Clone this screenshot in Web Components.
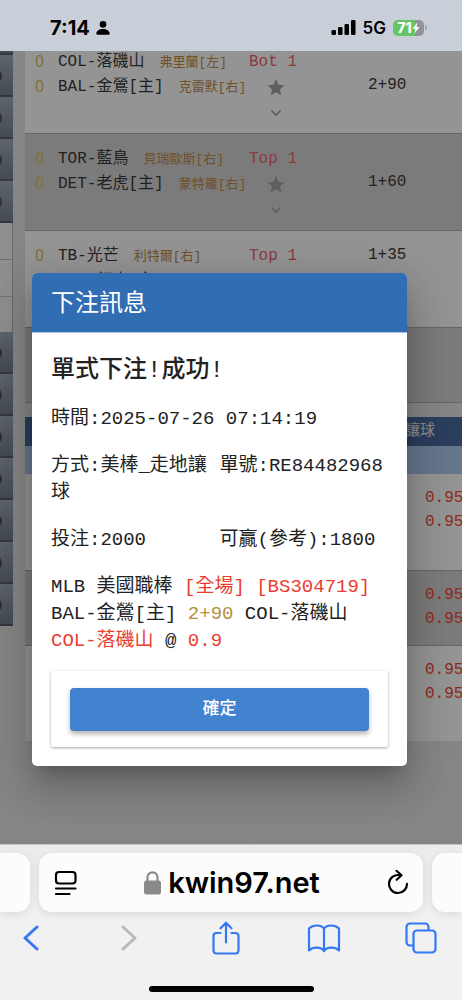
<!DOCTYPE html>
<html lang="zh-Hant">
<head>
<meta charset="utf-8">
<meta name="viewport" content="width=device-width, initial-scale=1">
<title>kwin97.net</title>
<style>
  html, body {
    height: 100%;
    margin: 0;
  }
  body {
    display: flex;
    flex-direction: column;
    background: #f0f0f0;
    color: #222;
    font-family: "Liberation Mono", "Noto Sans CJK TC", monospace;
    font-size: 16px;
  }
</style>
</head>
<body>
  <status-bar time="7:14" network="5G" battery="71"></status-bar>
  <page-stage>
    <side-menu slot="menu"></side-menu>
    <game-table></game-table>
    <odds-table></odds-table>
    <bet-dialog slot="dialog" heading="下注訊息">
      <span slot="result">單式下注!成功!</span>
      <bet-slip></bet-slip>
    </bet-dialog>
  </page-stage>
  <browser-bar address="kwin97.net"></browser-bar>

<script>
(function() {

  // attach an open root and fill it
  function render(el, html) {
    el.attachShadow({ mode: 'open' });
    const template = document.createElement('template');
    template.innerHTML = html;
    el.shadowRoot.appendChild(template.content.cloneNode(true));
  }

  class StatusBar extends HTMLElement {
    constructor() {
      super();
      render(this, `
      <style>
        :host {
          display: flex;
          flex: none;
          align-items: center;
          justify-content: space-between;
          box-sizing: border-box;
          height: 51px;
          padding: 4px 35px 0 50px;
          background: #c9cfd8;
          color: #000;
          font-family: Inter, sans-serif;
        }
        div { display: flex; align-items: center; }
        .left { gap: 6px; }
        .right { gap: 7px; }
        .time { font-size: 20px; font-weight: 700; }
        .net { font-size: 17px; font-weight: 600; }
        .battery { gap: 1px; }
        .cell {
          height: 16px;
          width: 31px;
          border-radius: 5px;
          background: linear-gradient(90deg, #65c466 22px, #929399 22px);
          color: #fff;
          font-size: 14px;
          font-weight: 800;
          justify-content: center;
        }
        .tip { width: 2px; height: 5px; border-radius: 0 2px 2px 0; background: #a2a6ad; }
        svg { display: block; }
      </style>
      <div class="left">
        <span class="time"></span>
        <svg width="14" height="14" viewBox="0 0 14 14"><circle cx="7" cy="3.4" r="3.3"/><path d="M0.3 12.6C0.3 9.6 3.4 7.9 7 7.9s6.7 1.700 6.700 4.700c0 .8-.5 1.200-1.200 1.200h-11c-.7 0-1.200-.4-1.200-1.200z"/></svg>
      </div>
      <div class="right">
        <svg width="25" height="15" viewBox="0 0 25 15"><rect x="0.500" y="10" width="4.500" height="5" rx="1.300"/><rect x="7" y="7" width="4.500" height="8" rx="1.300"/><rect x="13.500" y="4" width="4.500" height="11" rx="1.300"/><rect x="20" y="0" width="4.500" height="15" rx="1.300"/></svg>
        <span class="net"></span>
        <div class="battery">
          <div class="cell"><span class="level"></span><svg width="8" height="12" viewBox="0 0 8 12"><path fill="#fff" d="M5.300 0.500L0.500 6.800h2.800L2.400 11.500 7.500 5H4.500z"/></svg></div>
          <div class="tip"></div>
        </div>
      </div>`);
    }

    connectedCallback() {
      this.shadowRoot.querySelector('.time').textContent = this.getAttribute('time');
      this.shadowRoot.querySelector('.net').textContent = this.getAttribute('network');
      this.shadowRoot.querySelector('.level').textContent = this.getAttribute('battery');
    }
  }

  class PageStage extends HTMLElement {
    constructor() {
      super();
      render(this, `
      <style>
        :host {
          position: relative;
          display: flex;
          flex: 1;
          gap: 12px;
          min-height: 0;
          overflow: hidden;
          background: #e7e7e7;
        }
        /* scrolled a little past the top of the first game */
        main { flex: 1; min-width: 0; margin-top: -14px; }
      </style>
      <slot name="menu"></slot>
      <main><slot></slot></main>
      <slot name="dialog"></slot>`);
    }
  }

  class SideMenu extends HTMLElement {
    constructor() {
      super();
      const item = '<button type="button" aria-label="選單"><i></i></button>';
      render(this, `
      <style>
        :host { display: block; width: 13px; flex: none; overflow: hidden; margin-top: -38px; }
        button {
          display: flex;
          align-items: center;
          width: 100%;
          height: 42px;
          padding: 0;
          border: 0;
          border-top: 1px solid #a4aebb;
          border-bottom: 2px solid #57606e;
          background: linear-gradient(#a0abba, #76828f);
        }
        i { width: 14px; height: 14px; flex: none; margin-left: -12px; border-radius: 50%; background: #4c535d; }
        ul { margin: 0; padding: 0; list-style: none; border-right: 1px solid #bbb; background: #f6f6f6; }
        li { box-sizing: border-box; height: 37px; border-bottom: 1px solid #c4c4c4; }
        li:last-child { height: 35px; border: 0; }
      </style>
      ${item.repeat(5)}
      <ul><li></li><li></li><li></li></ul>
      ${item.repeat(7)}`);
    }
  }

  const games = [
    { away: 'COL-落磯山', awayP: '弗里蘭[左]', home: 'BAL-金鶯[主]', homeP: '克雷默[右]', inning: 'Bot 1', line: '2+90' },
    { away: 'TOR-藍鳥', awayP: '貝瑞歐斯[右]', home: 'DET-老虎[主]', homeP: '蒙特羅[右]', inning: 'Top 1', line: '1+60' },
    { away: 'TB-光芒', awayP: '利特爾[右]', home: 'CIN-紅人[主]', homeP: '', inning: 'Top 1', line: '1+35', top: true }
  ];

  class GameTable extends HTMLElement {
    constructor() {
      super();
      const rows = games.map(g => `
        <tr>
          <td class="score">0<br>0</td>
          <td>${g.away}<small>${g.awayP}</small><br>${g.home}<small>${g.homeP}</small></td>
          <td class="inning">${g.inning}
            <svg width="54" height="50" viewBox="0 0 54 50"><path fill="#a4a4a4" d="M27 5l2.500 5.700 6 .6-4.500 4.100 1.300 6.100-5.300-3.200-5.300 3.200 1.300-6.100-4.500-4.100 6-.6z"/><path fill="none" stroke="#a0a0a0" stroke-width="1.600" d="M22.500 36.500l4.500 4.500 4.500-4.500"/></svg>
          </td>
          <td class="line${g.top ? ' top' : ''}">${g.line}</td>
        </tr>`).join('');
      render(this, `
      <style>
        :host { display: block; margin-bottom: 14px; color: #3a3a3a; }
        table { width: 100%; table-layout: fixed; border-spacing: 0; line-height: 25px; }
        tr { height: 97px; background: #fff; }
        tr:nth-child(even) { background: #d5d5d5; }
        tr:last-child { height: 75px; }
        td { box-sizing: border-box; padding: 13px 0 0; border-bottom: 1px solid #b0b0b0; vertical-align: top; white-space: nowrap; }
        .score { padding-top: 12px; padding-left: 10px; color: #dcc458; font-family: Roboto, sans-serif; }
        small { margin-left: 15px; color: #bd8c43; font-size: 13px; }
        .inning { color: #f0646c; line-height: 24px; }
        .inning svg { display: block; }
        .line { padding-top: 36px; padding-left: 65px; line-height: 24px; }
        .line.top { padding-top: 12px; }
      </style>
      <table>
        <colgroup><col style="width:33px"><col style="width:191px"><col style="width:54px"><col></colgroup>
        ${rows}
        <tr><td colspan="4"></td></tr>
      </table>`);
    }
  }

  class OddsTable extends HTMLElement {
    constructor() {
      super();
      const row = '<tr><td></td><td class="odds">0.95<br>0.95</td></tr>';
      render(this, `
      <style>
        :host { display: block; }
        table { width: 100%; table-layout: fixed; border-spacing: 0; line-height: 24px; }
        td, th { padding: 0; font-weight: 400; text-align: left; }
        .head { height: 29px; background: #4a6ba0; color: #f4f4f4; font-size: 15px; }
        .sub { height: 28px; background: #b0cdf2; }
        tbody tr { height: 97px; background: #fff; }
        tbody tr:nth-child(even) { height: 75px; background: #d5d5d5; }
        tbody tr:last-child { height: 95px; }
        tbody td { box-sizing: border-box; padding-top: 12px; border-bottom: 1px solid #b0b0b0; vertical-align: top; }
        tbody tr:last-child td { border: 0; }
        .odds { padding-left: 20px; color: #f24b34; }
      </style>
      <table>
        <colgroup><col style="width:380px"><col></colgroup>
        <thead>
          <tr class="head"><td></td><th>讓球</th></tr>
          <tr class="sub"><td colspan="2"></td></tr>
        </thead>
        <tbody>${row.repeat(3)}</tbody>
      </table>`);
    }
  }

  class BetDialog extends HTMLElement {
    constructor() {
      super();
      render(this, `
      <style>
        :host {
          position: absolute;
          inset: 0;
          display: flex;
          align-items: flex-start;
          padding: 222px 55px 0 32px;
          background: rgba(0, 0, 0, .42);
        }
        :host([closed]) { display: none; }
        section {
          flex: 1;
          min-width: 0;
          overflow: hidden;
          border-radius: 5px;
          background: #fff;
          box-shadow: 0 11px 15px -7px rgba(0,0,0,.2), 0 24px 38px 3px rgba(0,0,0,.14), 0 9px 46px 8px rgba(0,0,0,.12);
        }
        h1 {
          margin: 0;
          padding: 4px 19px 0;
          border-bottom: 1px solid #a9c5e4;
          background: #316db2;
          color: #fff;
          font-size: 24px;
          font-weight: 400;
          line-height: 55px;
        }
        .body { padding: 23px 19px 19px; }
        h2 { margin: 0 0 20px; font-size: 24px; font-weight: 500; line-height: 30px; }
        .actions {
          margin-top: 16px;
          padding: 17px 19px 16px;
          border-radius: 2px;
          box-shadow: 0 1px 3px rgba(0,0,0,.35);
        }
        button {
          display: block;
          width: 100%;
          height: 43px;
          padding: 0 0 6px;
          border: 0;
          border-radius: 4px;
          background: #4282cf;
          color: #fff;
          font: 500 17px "Noto Sans CJK TC", sans-serif;
          box-shadow: 0 3px 5px rgba(0,0,0,.3);
        }
      </style>
      <section role="dialog" aria-labelledby="title">
        <h1 id="title"></h1>
        <div class="body">
          <h2><slot name="result"></slot></h2>
          <slot></slot>
          <div class="actions"><button type="button">確定</button></div>
        </div>
      </section>`);
      this.close = this.close.bind(this);
    }

    connectedCallback() {
      this.shadowRoot.querySelector('h1').textContent = this.getAttribute('heading');
      this.shadowRoot.querySelector('button').addEventListener('click', this.close);
    }

    disconnectedCallback() {
      this.shadowRoot.querySelector('button').removeEventListener('click', this.close);
    }

    close() {
      this.setAttribute('closed', '');
    }
  }

  class BetSlip extends HTMLElement {
    constructor() {
      super();
      render(this, `
      <style>
        :host { display: grid; grid-template-columns: 1fr 1fr; gap: 20px 0; font-size: 19px; line-height: 27px; }
        .wide { grid-column: 1 / 3; }
        .red { color: #ea3d2f; }
        .gold { color: #b5903c; }
      </style>
      <div class="wide">時間:2025-07-26 07:14:19</div>
      <div>方式:美棒_走地讓球</div>
      <div>單號:RE84482968</div>
      <div>投注:2000</div>
      <div>可贏(參考):1800</div>
      <div class="wide">
        MLB 美國職棒 <span class="red">[全場] [BS304719]</span><br>
        BAL-金鶯[主] <span class="gold">2+90</span> COL-落磯山<br>
        <span class="red">COL-落磯山</span> @ <span class="red">0.9</span>
      </div>`);
    }
  }

  class BrowserBar extends HTMLElement {
    constructor() {
      super();
      render(this, `
      <style>
        :host {
          display: block;
          flex: none;
          box-sizing: border-box;
          height: 156px;
          padding-top: 8px;
          overflow: hidden;
          border-top: 1px solid #c4c4c4;
          background: linear-gradient(#ececec, #f1f1f1 60px);
          color: #000;
          font-family: Inter, sans-serif;
        }
        button { display: flex; align-items: center; justify-content: center; padding: 0; border: 0; background: none; color: inherit; font: inherit; }
        svg { display: block; fill: none; stroke: currentColor; stroke-linecap: round; stroke-linejoin: round; }
        .tabs { display: flex; gap: 9px; height: 59px; }
        .tab, .peek { border-radius: 13px; background: #fcfcfc; box-shadow: 0 2px 10px rgba(0,0,0,.1); }
        .peek { flex: none; width: 30px; }
        .peek:first-child { border-radius: 0 13px 13px 0; }
        .peek:last-child { border-radius: 13px 0 0 13px; }
        .tab { display: flex; flex: 1; align-items: center; justify-content: space-between; padding: 0 13px 0 15px; }
        .address { gap: 7px; font-size: 29px; font-weight: 600; }
        nav { display: flex; justify-content: space-between; padding: 6px 21px 0 11px; color: #3478f6; }
        nav button { width: 40px; height: 40px; }
        nav button:disabled { color: #b9b9bb; }
        .home { width: 165px; height: 6px; margin: 28px auto 0; border-radius: 3px; background: #000; }
      </style>
      <div class="tabs">
        <div class="peek"></div>
        <div class="tab">
          <button type="button" aria-label="頁面選單"><svg width="24" height="26" viewBox="0 0 24 26" stroke-width="2.200"><rect x="2" y="2" width="19.500" height="11.500" rx="3"/><path d="M2 18.500h19.500M2 24h13.500"/></svg></button>
          <button type="button" class="address"><svg width="17" height="24" viewBox="0 0 17 24"><rect x="0" y="9.500" width="17" height="14" rx="2.500" fill="#8a8a8d" stroke="none"/><path stroke="#8a8a8d" stroke-width="2.200" d="M3.500 10V6.300a5 5 0 0 1 10 0V10"/></svg><span></span></button>
          <button type="button" aria-label="重新載入"><svg width="24" height="26" viewBox="0 0 24 26" stroke-width="2.200"><path d="M13.300 5.100A9 9 0 1 0 21 13.800M10.500 0.800l5 4.500-4.800 4.500"/></svg></button>
        </div>
        <div class="peek"></div>
      </div>
      <nav>
        <button type="button" aria-label="返回"><svg width="16" height="26" viewBox="0 0 16 26" stroke-width="3"><path d="M14 2L2 13l12 11"/></svg></button>
        <button type="button" aria-label="前進" disabled><svg width="16" height="26" viewBox="0 0 16 26" stroke-width="3"><path d="M2 2l12 11L2 24"/></svg></button>
        <button type="button" aria-label="分享"><svg width="28" height="34" viewBox="0 0 28 34" stroke-width="2.200"><path d="M8.500 12H4.500a3 3 0 0 0-3 3v14.500a3 3 0 0 0 3 3h19a3 3 0 0 0 3-3V15a3 3 0 0 0-3-3h-4M14 21.500V2M8.500 7.300L14 1.700l5.500 5.600"/></svg></button>
        <button type="button" aria-label="書籤"><svg width="34" height="30" viewBox="0 0 34 30" stroke-width="2.200"><path d="M17 5.500C14 1.500 6 1.500 2 5.500V27.500c4-3.800 12-3.800 15 .5 3-4.300 11-4.300 15-.5V5.500C28 1.500 20 1.500 17 5.500zV28"/></svg></button>
        <button type="button" aria-label="分頁"><svg width="32" height="32" viewBox="0 0 32 32" stroke-width="2.200"><rect x="8.500" y="8.500" width="22" height="22" rx="3.500"/><path d="M8 23.500H5a3.500 3.500 0 0 1-3.500-3.500V5A3.500 3.500 0 0 1 5 1.500h15A3.500 3.500 0 0 1 23.500 5v3"/></svg></button>
      </nav>
      <div class="home"></div>`);
    }

    connectedCallback() {
      this.shadowRoot.querySelector('.address span').textContent = this.getAttribute('address');
    }
  }

  window.customElements.define('status-bar', StatusBar);
  window.customElements.define('page-stage', PageStage);
  window.customElements.define('side-menu', SideMenu);
  window.customElements.define('game-table', GameTable);
  window.customElements.define('odds-table', OddsTable);
  window.customElements.define('bet-dialog', BetDialog);
  window.customElements.define('bet-slip', BetSlip);
  window.customElements.define('browser-bar', BrowserBar);

})();
</script>
</body>
</html>
